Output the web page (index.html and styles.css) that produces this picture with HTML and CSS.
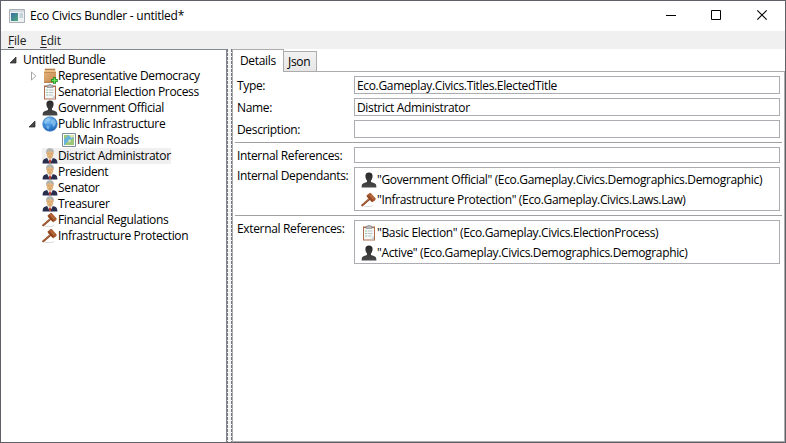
FILE: index.html
```html
<!DOCTYPE html>
<html lang="en">
<head>
<meta charset="utf-8">
<title>Eco Civics Bundler - untitled*</title>
<link rel="stylesheet" href="styles.css">
</head>
<body>
<svg class="defs" width="0" height="0" aria-hidden="true">
  <defs>
    <linearGradient id="g-box" x1="0" y1="0" x2="1" y2="1"><stop offset="0" stop-color="#e3b27c"/><stop offset="1" stop-color="#c58748"/></linearGradient>
    <radialGradient id="g-globe" cx=".4" cy=".25" r=".8"><stop offset="0" stop-color="#8fc9f5"/><stop offset=".5" stop-color="#3d8edb"/><stop offset="1" stop-color="#1c5eb0"/></radialGradient>
    <linearGradient id="g-person" x1="0" y1="0" x2="0" y2="1"><stop offset="0" stop-color="#292929"/><stop offset="1" stop-color="#484848"/></linearGradient>
    <linearGradient id="g-app" x1="0" y1="0" x2="1" y2="1"><stop offset="0" stop-color="#3c6fa8"/><stop offset="1" stop-color="#4fa878"/></linearGradient>
    <symbol id="box" viewBox="0 0 16 16">
      <path d="M2 4h12v10.500H2z" fill="url(#g-box)"/>
      <path d="M3 .8h10L14 4.500H2z" fill="#e9bc86"/>
      <path d="M3 1.300h10" stroke="#a8713d" fill="none"/>
      <path d="M2 4.500h12" stroke="#b98148" stroke-width=".8"/>
      <path d="M2 14.300h12" stroke="#94602f" stroke-width=".8"/>
      <path d="M12.500 9.200v6.600M9.200 12.500h6.600" stroke="#178a1e" stroke-width="3"/>
      <path d="M12.500 10v5M10 12.500h5" stroke="#6be05b" stroke-width="1.300"/>
    </symbol>
    <symbol id="clip" viewBox="0 0 16 16">
      <path d="M2 1.500h12v14H2z" fill="#b06a4c"/>
      <path d="M3 3h10v11.500H3z" fill="#f5f8f6"/>
      <path d="M5 1.200h2L7.300 0h1.400L9 1.200h2v2.300H5z" fill="#b5b8bb" stroke="#777" stroke-width=".5"/>
      <path d="M4.500 6h1M4.500 8.500h1M4.500 11h1" stroke="#3f9a55"/>
      <path d="M6.700 6h4.800M6.700 8.500h4.800M6.700 11h4" stroke="#a7b5bb" stroke-width=".8"/>
      <path d="M13 11v3.500H9.500z" fill="#c9d2d4"/>
    </symbol>
    <symbol id="person" viewBox="0 0 16 16">
      <path d="M8 .5c2.500 0 3.700 1.500 3.600 3.800-.1 2-.7 3.200-1.600 4.200v1.500c1.800.8 4.400 1 5 2.600.3.800.4 1.900.4 2.900H.6c0-1 .1-2.100.4-2.900.6-1.600 3.200-1.800 5-2.600V8.500C5.100 7.500 4.500 6.300 4.400 4.300 4.300 2 5.500.5 8 .5z" fill="url(#g-person)"/>
    </symbol>
    <symbol id="globe" viewBox="0 0 16 16">
      <circle cx="8" cy="8" r="7.300" fill="url(#g-globe)" stroke="#3f82c4" stroke-width=".6"/>
      <path d="M3 4l3-2 2.500.7L7 4.500 5.500 5 5 7 3.500 8 2 6.500zM9.500 4l2.500-1 2 3-.5 3-2 2.500-1-3L9 7zM4.500 9.500l3 1-1 3-2-1.500z" fill="#a4d2f4" opacity=".6"/>
    </symbol>
    <symbol id="map" viewBox="0 0 16 16">
      <path d="M1.500 1.500h13v13h-13z" fill="#fff" stroke="#7d8d98"/>
      <path d="M3 3h10v10H3z" fill="#67b3e0"/>
      <path d="M3 3h4L5.500 5.500 3 7zM13 6v7H4l2-3 3 .5L10.500 7z" fill="#9bc978"/>
      <path d="M8 3h5v2l-3 1zM7 9l2-2 1 2-2 2z" fill="#dce5a1"/>
    </symbol>
    <symbol id="official" viewBox="0 0 16 16">
      <path d="M.6 15.500c0-3 .8-4.300 3-4.900L6 9.800h4l2.400.8c2.200.6 3 1.900 3 4.900z" fill="#292e4c"/>
      <path d="M5.200 10.300L8 15.500l2.800-5.200L9.500 9h-3z" fill="#eef0f4"/>
      <path d="M7.300 11.500h1.400l.5 2.500L8 15.500 6.800 14z" fill="#b8342f"/>
      <path d="M4.500 4.500C4.500 2.500 5.800 1.500 8 1.500s3.500 1 3.500 3C11.500 8 10.200 11 8 11S4.500 8 4.500 4.500z" fill="#e3b47c"/>
      <path d="M4.200 6.200C3.600 2.200 5 .3 8 .3s4.400 1.900 3.800 5.900L11 4 8 3 5 4z" fill="#b3b3af"/>
      <path d="M5.800 5.800h1.400M8.800 5.800h1.400M7 8.800h2" stroke="#b58353" stroke-width=".6"/>
    </symbol>
    <symbol id="gavel" viewBox="0 0 16 16">
      <path d="M3 14.500h7l2-1" stroke="#ddd" fill="none"/>
      <path d="M1.300 13.300L9 6.500" stroke="#84401e" stroke-width="2.100" stroke-linecap="round"/>
      <path d="M1.500 12.900L8.500 6.600" stroke="#c57a48" stroke-width=".9" stroke-linecap="round"/>
      <path d="M5.500 3.500L9 .7l1.500 1 3.800 4.500.2 1.800-3.400 2.300-1.400-1.200L6 5z" fill="#9c4e26"/>
      <path d="M8.200 2.300l4.500 5.200M10 2l3.500 4.200" stroke="#cf8552" stroke-width=".9"/>
      <path d="M6.800 4.300l4 4.600" stroke="#74371a" stroke-width=".6"/>
    </symbol>
    <symbol id="open" viewBox="0 0 8 8"><path d="M7 1v6H1z" fill="#484848" stroke="#262626" stroke-width=".7"/></symbol>
    <symbol id="closed" viewBox="0 0 8 10"><path d="M1.500 1v8L5.800 5z" fill="#fff" stroke="#a5a5a5"/></symbol>
  </defs>
</svg>
<div class="window">
  <header class="titlebar">
    <svg class="app-icon" viewBox="0 0 16 14"><path d="M.5.500h15v13H.5z" fill="#eef1f3" stroke="#aab0b6"/><path d="M1 1h14v2H1z" fill="#d3d8dd"/><path d="M2 4h7v8H2z" fill="url(#g-app)"/><path d="M10.500 4H14v5h-3.500z" fill="#c5d2dc"/></svg>
    <h1>Eco Civics Bundler - untitled*</h1>
    <div class="controls">
      <svg viewBox="0 0 46 30"><path d="M19 14.500h10" stroke="#000"/></svg>
      <svg viewBox="0 0 46 30"><path d="M18.500 9.500h9v9h-9z" fill="none" stroke="#000"/></svg>
      <svg viewBox="0 0 46 30"><path d="M18.300 9.300l9.400 9.400M27.700 9.300l-9.400 9.400" fill="none" stroke="#000" stroke-width="1.100"/></svg>
    </div>
  </header>
  <nav class="menu"><span><u>F</u>ile</span><span><u>E</u>dit</span></nav>
  <main>
    <ul class="tree">
      <li><svg class="arrow"><use href="#open"/></svg><span>Untitled Bundle</span></li>
      <li class="l1"><svg class="arrow shut"><use href="#closed"/></svg><svg class="icon"><use href="#box"/></svg><span>Representative Democracy</span></li>
      <li class="l1 leaf"><svg class="icon"><use href="#clip"/></svg><span>Senatorial Election Process</span></li>
      <li class="l1 leaf"><svg class="icon"><use href="#person"/></svg><span>Government Official</span></li>
      <li class="l1"><svg class="arrow"><use href="#open"/></svg><svg class="icon"><use href="#globe"/></svg><span>Public Infrastructure</span></li>
      <li class="l2"><svg class="icon"><use href="#map"/></svg><span>Main Roads</span></li>
      <li class="l1 leaf"><div class="selected"><svg class="icon"><use href="#official"/></svg><span>District Administrator</span></div></li>
      <li class="l1 leaf"><svg class="icon"><use href="#official"/></svg><span>President</span></li>
      <li class="l1 leaf"><svg class="icon"><use href="#official"/></svg><span>Senator</span></li>
      <li class="l1 leaf"><svg class="icon"><use href="#official"/></svg><span>Treasurer</span></li>
      <li class="l1 leaf"><svg class="icon"><use href="#gavel"/></svg><span>Financial Regulations</span></li>
      <li class="l1 leaf"><svg class="icon"><use href="#gavel"/></svg><span>Infrastructure Protection</span></li>
    </ul>
    <div class="splitter"></div>
    <section class="panel">
      <div class="tabs"><div class="tab active">Details</div><div class="tab">Json</div><div class="rest"></div></div>
      <div class="details">
        <div class="group basic">
          <div class="label">Type:</div><div class="field">Eco.Gameplay.Civics.Titles.ElectedTitle</div>
          <div class="label">Name:</div><div class="field">District Administrator</div>
          <div class="label">Description:</div><div class="field"></div>
        </div>
        <div class="group internal">
          <div class="label">Internal References:</div><div class="list"></div>
          <div class="label">Internal Dependants:</div>
          <div class="list">
            <div class="item"><svg class="icon"><use href="#person"/></svg><span>"Government Official" (Eco.Gameplay.Civics.Demographics.Demographic)</span></div>
            <div class="item"><svg class="icon"><use href="#gavel"/></svg><span>"Infrastructure Protection" (Eco.Gameplay.Civics.Laws.Law)</span></div>
          </div>
        </div>
        <div class="group external">
          <div class="label">External References:</div>
          <div class="list">
            <div class="item"><svg class="icon"><use href="#clip"/></svg><span>"Basic Election" (Eco.Gameplay.Civics.ElectionProcess)</span></div>
            <div class="item"><svg class="icon"><use href="#person"/></svg><span>"Active" (Eco.Gameplay.Civics.Demographics.Demographic)</span></div>
          </div>
        </div>
      </div>
    </section>
  </main>
</div>
</body>
</html>
```
FILE: styles.css
```css
* { box-sizing: border-box; }
html, body { margin: 0; height: 100%; overflow: hidden; }
body {
  font: 12px/16px "Open Sans", "Noto Sans", sans-serif;
  letter-spacing: -0.34px;
  color: #000;
  background: #fff;
}
svg { display: block; flex: none; }
.defs { position: absolute; }
.window { width: 786px; height: 443px; border: 1px solid #5f6168; display: flex; flex-direction: column; }
.titlebar { height: 30px; flex: none; display: flex; align-items: center; padding-left: 8px; }
.app-icon { width: 16px; height: 14px; margin-right: 5px; }
h1 { margin: 0; font: inherit; letter-spacing: -0.25px; flex: 1; }
.controls { display: flex; }
.controls svg { width: 46px; height: 30px; }
.menu { height: 18px; flex: none; background: #f0f0f0; color: #212121; display: flex; gap: 14px; padding: 2px 0 0 7px; letter-spacing: -0.2px; }
.menu u { text-underline-offset: 2px; }
main { flex: 1; display: flex; min-height: 0; }
.tree { list-style: none; margin: 0; padding: 2px 0 0 6px; width: 226px; border: 1px solid #828790; border-width: 1px 1px 0 0; white-space: nowrap; }
.tree li { height: 16px; display: flex; align-items: center; }
.arrow { width: 8px; height: 8px; margin: 0 6px 0 2px; }
.arrow.shut { height: 10px; margin: 0 4px 0 4px; }
.icon { width: 16px; height: 16px; }
.tree .l1 { padding-left: 19px; }
.tree .l1 .arrow { margin-right: 6px; }
.tree .l1 .shut { margin-right: 4px; }
.tree .leaf { padding-left: 35px; }
.tree .l2 { padding-left: 54px; }
.selected { display: flex; background: #f0f0f0; height: 16px; }
.splitter { width: 5px; background: repeating-linear-gradient(#74767b 0 3px, #f0f0f0 3px 4px) left / 1px 100% no-repeat, repeating-linear-gradient(#74767b 0 3px, #f0f0f0 3px 4px) right / 1px 100% no-repeat, #f5f5f5; }
.panel { flex: 1; display: flex; flex-direction: column; min-width: 0; }
.tabs { display: flex; height: 23px; align-items: flex-end; }
.tab { height: 21px; width: 33px; border: 1px solid #acacac; border-left: 0; background: linear-gradient(#f2f2f2, #e6e6e6); padding: 2px 0 0 4px; }
.tab.active { height: 23px; width: 52px; background: #fff; border: 1px solid #acacac; border-bottom: 0; padding: 3px 0 0 7px; }
.rest { flex: 1; border-bottom: 1px solid #acacac; }
.details { flex: 1; border: 1px solid #acacac; border-top: 0; padding: 0 2px; }
.group { display: grid; grid-template-columns: 119px 426px; align-content: start; padding: 4px 0; border-bottom: 1px solid #a0a0a0; }
.label { padding-left: 2px; height: 16px; white-space: nowrap; }
.field, .list { border: 1px solid #abadb3; }
.basic { row-gap: 4px; }
.field { height: 18px; padding: 1px 0 0 2px; }
.basic .label { height: 18px; padding-top: 1.500px; }
.internal { row-gap: 4px; }
.internal .label, .external .label { padding-top: 1px; }
.list { min-height: 16px; }
.item { display: flex; align-items: center; height: 20px; padding-left: 6px; white-space: nowrap; }
.list:has(.item) { padding: 2px 0 0; height: 44px; }
.external { border-bottom: 0; }
```
